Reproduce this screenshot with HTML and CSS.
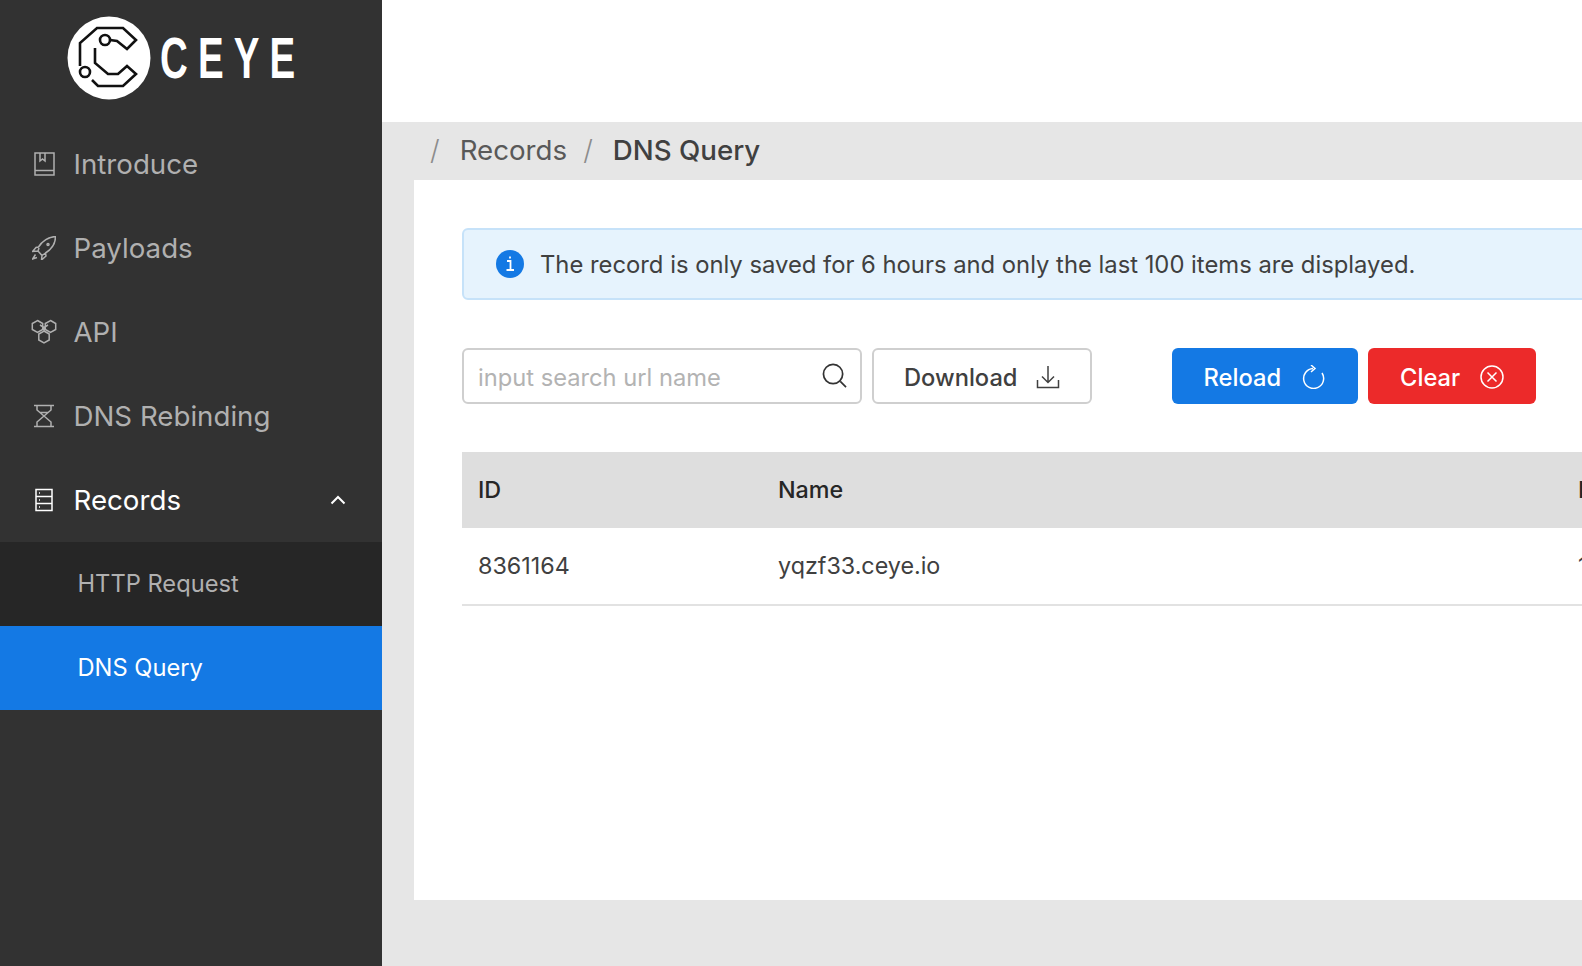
FILE: index.html
```html
<!DOCTYPE html>
<html lang="en">
<head>
<meta charset="utf-8">
<title>CEYE - DNS Query</title>
<link rel="stylesheet" href="styles.css">
</head>
<body>
<div class="layout">
  <aside class="sidebar">
    <div class="logo">
      <svg class="logo-mark" viewBox="0 0 84 84" width="84" height="84">
        <circle cx="42" cy="42" r="41.5" fill="#fff"/>
        <g fill="none" stroke="#111" stroke-width="2.600">
          <path d="M13 50V27L30 12H56L69 24L60 33L50 25L43 24"/>
          <circle cx="38" cy="24" r="5"/>
          <circle cx="18" cy="56" r="5"/>
          <path d="M28 32V47L41 58H51L60 50L69 58L56 70H31L25 64"/>
        </g>
      </svg>
      <span class="logo-text">CEYE</span>
    </div>
    <nav class="menu">
      <a class="menu-item">
        <svg class="menu-icon" viewBox="0 0 24 24"><path d="M3 1H22V23H3ZM3 18.500H22M8 1V9L10.500 7L13 9V1"/></svg>
        <span>Introduce</span>
      </a>
      <a class="menu-item">
        <svg class="menu-icon" viewBox="0 0 24 24"><path d="M23.500 .5C16 1 11 4 6.500 11L4 11.500L.5 15.500L6 15L10 19.500L9.500 24L14 20L13.500 17C20 13 23.500 8 23.500 .5ZM6 15L7 12M10 19.500L13.500 17M3.500 18.500L.5 23L5 21.500"/><circle cx="16" cy="8.500" r="1"/></svg>
        <span>Payloads</span>
      </a>
      <a class="menu-item">
        <svg class="menu-icon menu-icon-wide" viewBox="0 0 26 26"><path d="M6.500 1.500L11.700 4.500V10.500L6.500 13.500L1.300 10.500V4.500ZM19.500 1.500L24.700 4.500V10.500L19.500 13.500L14.300 10.500V4.500ZM13 12L18.200 15V21L13 24L7.800 21V15ZM9 6L13 8.500L17 6M13 8.500V12"/></svg>
        <span>API</span>
      </a>
      <a class="menu-item">
        <svg class="menu-icon" viewBox="0 0 24 24"><path d="M2 1.500H22M2 22.500H22M5 1.500V6L19 18V22.500M19 1.500V6L5 18V22.500M8 8.500H16"/></svg>
        <span>DNS Rebinding</span>
      </a>
      <a class="menu-item menu-item-open">
        <svg class="menu-icon" viewBox="0 0 24 24"><path d="M4 1.500H20V22.500H4ZM4 8.500H20M4 15.500H20M7 5H8M7 12H8M7 19H8"/></svg>
        <span>Records</span>
        <svg class="menu-chevron" viewBox="0 0 16 10"><path d="M1.500 8.500L8 2L14.500 8.500"/></svg>
      </a>
      <div class="submenu">
        <a class="submenu-item">HTTP Request</a>
        <a class="submenu-item submenu-item-active">DNS Query</a>
      </div>
    </nav>
  </aside>
  <div class="main">
    <header class="topbar"></header>
    <div class="breadcrumb">
      <span class="crumb-sep">/</span>
      <span class="crumb">Records</span>
      <span class="crumb-sep">/</span>
      <span class="crumb crumb-current">DNS Query</span>
    </div>
    <section class="panel">
      <div class="alert">
        <svg class="alert-icon" viewBox="0 0 28 28"><circle cx="14" cy="14" r="14" fill="#1479e4"/><path d="M11 11H14.500V20M10.500 20H18M14 6.500V8.500" fill="none" stroke="#fff" stroke-width="1.800"/></svg>
        <span>The record is only saved for 6 hours and only the last 100 items are displayed.</span>
      </div>
      <div class="toolbar">
        <div class="search">
          <input class="search-input" type="text" placeholder="input search url name">
          <svg class="search-icon" viewBox="0 0 26 26"><circle cx="11.500" cy="11.500" r="10"/><path d="M19 19L25 25"/></svg>
        </div>
        <button class="btn btn-default" type="button">Download
          <svg class="btn-icon" viewBox="0 0 24 24"><path d="M12 1V17M6 11.500L12 17.500L18 11.500M1.500 15V22.500H22.500V15"/></svg>
        </button>
        <button class="btn btn-primary btn-first" type="button">Reload
          <svg class="btn-icon" viewBox="0 0 24 24"><path d="M11 3.500A10 10 0 1 0 20 8M9 0L13 3.500L9 7"/></svg>
        </button>
        <button class="btn btn-danger" type="button">Clear
          <svg class="btn-icon" viewBox="0 0 24 24"><circle cx="12" cy="12" r="11"/><path d="M7.500 7.500L16.500 16.500M16.500 7.500L7.500 16.500"/></svg>
        </button>
      </div>
      <table class="table">
        <thead>
          <tr><th class="col-id">ID</th><th class="col-name">Name</th><th>IP</th></tr>
        </thead>
        <tbody>
          <tr><td>8361164</td><td>yqzf33.ceye.io</td><td>1</td></tr>
        </tbody>
      </table>
    </section>
  </div>
</div>
</body>
</html>
```
FILE: styles.css
```css
* { box-sizing: border-box; }
html, body { margin: 0; height: 100%; overflow: hidden; }
body { font-family: Inter, "Liberation Sans", sans-serif; color: #404040; }
.layout { display: flex; height: 966px; width: 1582px; overflow: hidden; }
.sidebar { flex: 0 0 382px; background: #323232; color: #b0b0b0; }
.logo { height: 122px; display: flex; align-items: flex-start; padding: 16px 0 0 67px; }
.logo-mark { display: block; flex: none; }
.logo-text { font-family: "Liberation Sans", sans-serif; font-weight: 700; font-size: 57px; line-height: 84px; color: #fff; letter-spacing: 15px; margin-left: 9px; transform: scaleX(.675); transform-origin: left center; }
.menu-item { height: 84px; display: flex; align-items: center; padding-left: 32px; font-size: 27.700px; color: #b0b0b0; }
.menu-icon { width: 24px; height: 24px; margin-right: 17.500px; fill: none; stroke: currentColor; stroke-width: 1.500; flex: none; }
.menu-icon-wide { width: 26px; height: 26px; margin-left: -1px; margin-right: 16.500px; }
.menu-item-open { color: #fff; }
.menu-chevron { width: 16px; height: 10px; margin-left: auto; margin-right: 36px; fill: none; stroke: #fff; stroke-width: 2; }
.submenu { background: #262626; }
.submenu-item { display: flex; align-items: center; height: 84px; padding: 0 0 2px 77.500px; font-size: 23.700px; color: #b0b0b0; }
.submenu-item-active { background: #1479e4; color: #fff; }
.main { flex: 0 0 1200px; background: #e6e6e6; min-width: 0; }
.topbar { height: 122px; background: #fff; }
.breadcrumb { height: 58px; display: flex; align-items: center; padding: 0 0 2px 48px; font-size: 27.700px; color: #595959; }
.crumb-sep { color: #8c8c8c; margin-right: 20px; font-weight: 300; }
.crumb { margin-right: 16px; }
.crumb-current { color: #404040; font-weight: 500; }
.panel { margin-left: 32px; width: 1400px; height: 720px; background: #fff; padding: 48px; }
.alert { height: 72px; display: flex; align-items: center; padding-left: 32px; background: #e6f3fd; border: 2px solid #c6e2f9; border-radius: 6px; font-size: 23.800px; color: #404040; }
.alert-icon { width: 28px; height: 28px; margin-right: 16px; flex: none; }
.toolbar { display: flex; gap: 10px; margin-top: 48px; height: 56px; }
.search { position: relative; width: 400px; }
.search-input { width: 100%; height: 100%; border: 2px solid #cfcfcf; border-radius: 6px; padding: 2px 50px 0 14px; font: inherit; font-size: 23.700px; color: #404040; outline: none; }
.search-input::placeholder { color: #b3b3b3; opacity: 1; }
.search-icon { position: absolute; right: 15px; top: 15px; width: 25px; height: 25px; fill: none; stroke: #333; stroke-width: 1.800; }
.btn { display: flex; align-items: center; gap: 20px; height: 56px; padding: 2px 30px 0; border-radius: 6px; font: inherit; font-size: 23.700px; font-weight: 500; border: 2px solid transparent; }
.btn-icon { width: 24px; height: 24px; fill: none; stroke: currentColor; stroke-width: 1.500; }
.btn-default { gap: 18px; background: #fff; border-color: #cfcfcf; color: #404040; }
.btn-primary { gap: 21px; background: #1479e4; color: #fff; }
.btn-danger { background: #ec2a2a; color: #fff; }
.btn-first { margin-left: 70px; }
.table { width: 100%; margin-top: 48px; border-collapse: collapse; font-size: 23.300px; table-layout: fixed; }
.table th { height: 76px; background: #dedede; color: #262626; font-weight: 500; text-align: left; padding: 0 16px 2px; }
.table td { height: 77px; padding: 0 16px 2px; border-bottom: 2px solid #e2e2e2; color: #404040; }
.col-id { width: 300px; }
.col-name { width: 800px; }
```
